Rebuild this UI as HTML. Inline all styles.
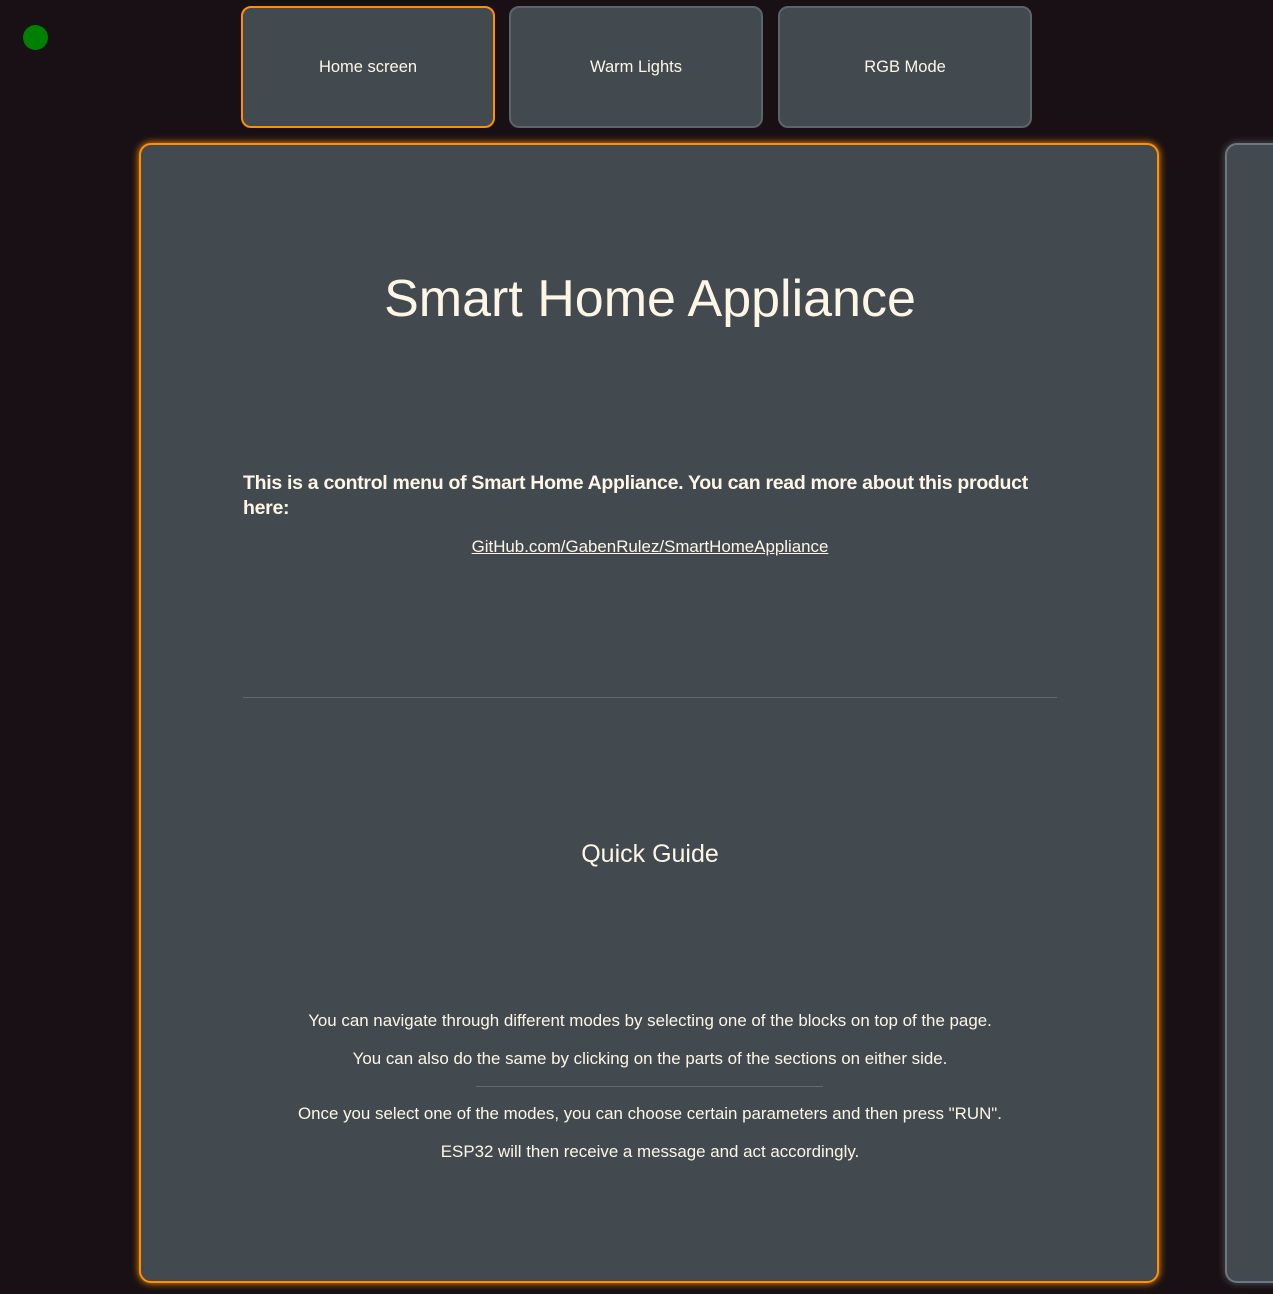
<!DOCTYPE html>
<html><head><meta charset="utf-8"><style>
html,body{margin:0;padding:0;}
body{width:1273px;height:1294px;background:#181014;position:relative;overflow:hidden;font-family:"Liberation Sans",sans-serif;color:#fdf6e6;}
.dot{position:absolute;left:23px;top:25px;width:25px;height:25px;border-radius:50%;background:#008000;}
.btn{position:absolute;top:6px;width:250px;height:117px;background:#424a50;border:2px solid #5a646b;border-radius:10px;display:flex;align-items:center;justify-content:center;font-size:16.5px;color:#fdf6e6;padding-top:1px;box-sizing:content-box;}
.btn.sel{border-color:#ff9000;}
.panel{position:absolute;left:139px;top:143px;width:1016px;height:1136px;background:#424a50;border:2px solid #ff9000;border-radius:12px;box-shadow:0 0 8px #ff9000;}
.rpanel{position:absolute;left:1225px;top:143px;width:100px;height:1136px;background:#424a50;border:2px solid #6c7880;border-radius:12px;box-shadow:0 0 8px rgba(150,160,170,.5);}
.t{position:absolute;left:0;width:1018px;text-align:center;}
.s{font-size:16.9px;}
</style></head><body>
<div class="dot"></div>
<div class="btn sel" style="left:241px">Home screen</div>
<div class="btn" style="left:509px">Warm Lights</div>
<div class="btn" style="left:778px">RGB Mode</div>
<div class="panel">
  <div class="t" style="top:124px;font-size:52px;line-height:60px;">Smart Home Appliance</div>
  <div style="position:absolute;left:102px;top:326px;width:815px;font-size:19.5px;font-weight:bold;line-height:25px;letter-spacing:-0.3px;">This is a control menu of Smart Home Appliance. You can read more about this product here:</div>
  <div class="t s" style="top:392px;"><span style="text-decoration:underline">GitHub.com/GabenRulez/SmartHomeAppliance</span></div>
  <div style="position:absolute;left:102px;top:552px;width:814px;height:1px;background:#5f696f;"></div>
  <div class="t" style="top:695px;font-size:25px;">Quick Guide</div>
  <div class="t s" style="top:866px;">You can navigate through different modes by selecting one of the blocks on top of the page.</div>
  <div class="t s" style="top:904px;">You can also do the same by clicking on the parts of the sections on either side.</div>
  <div style="position:absolute;left:335px;top:941px;width:347px;height:1px;background:#5f696f;"></div>
  <div class="t s" style="top:959px;">Once you select one of the modes, you can choose certain parameters and then press "RUN".</div>
  <div class="t s" style="top:997px;">ESP32 will then receive a message and act accordingly.</div>
</div>
<div class="rpanel"></div>
</body></html>
